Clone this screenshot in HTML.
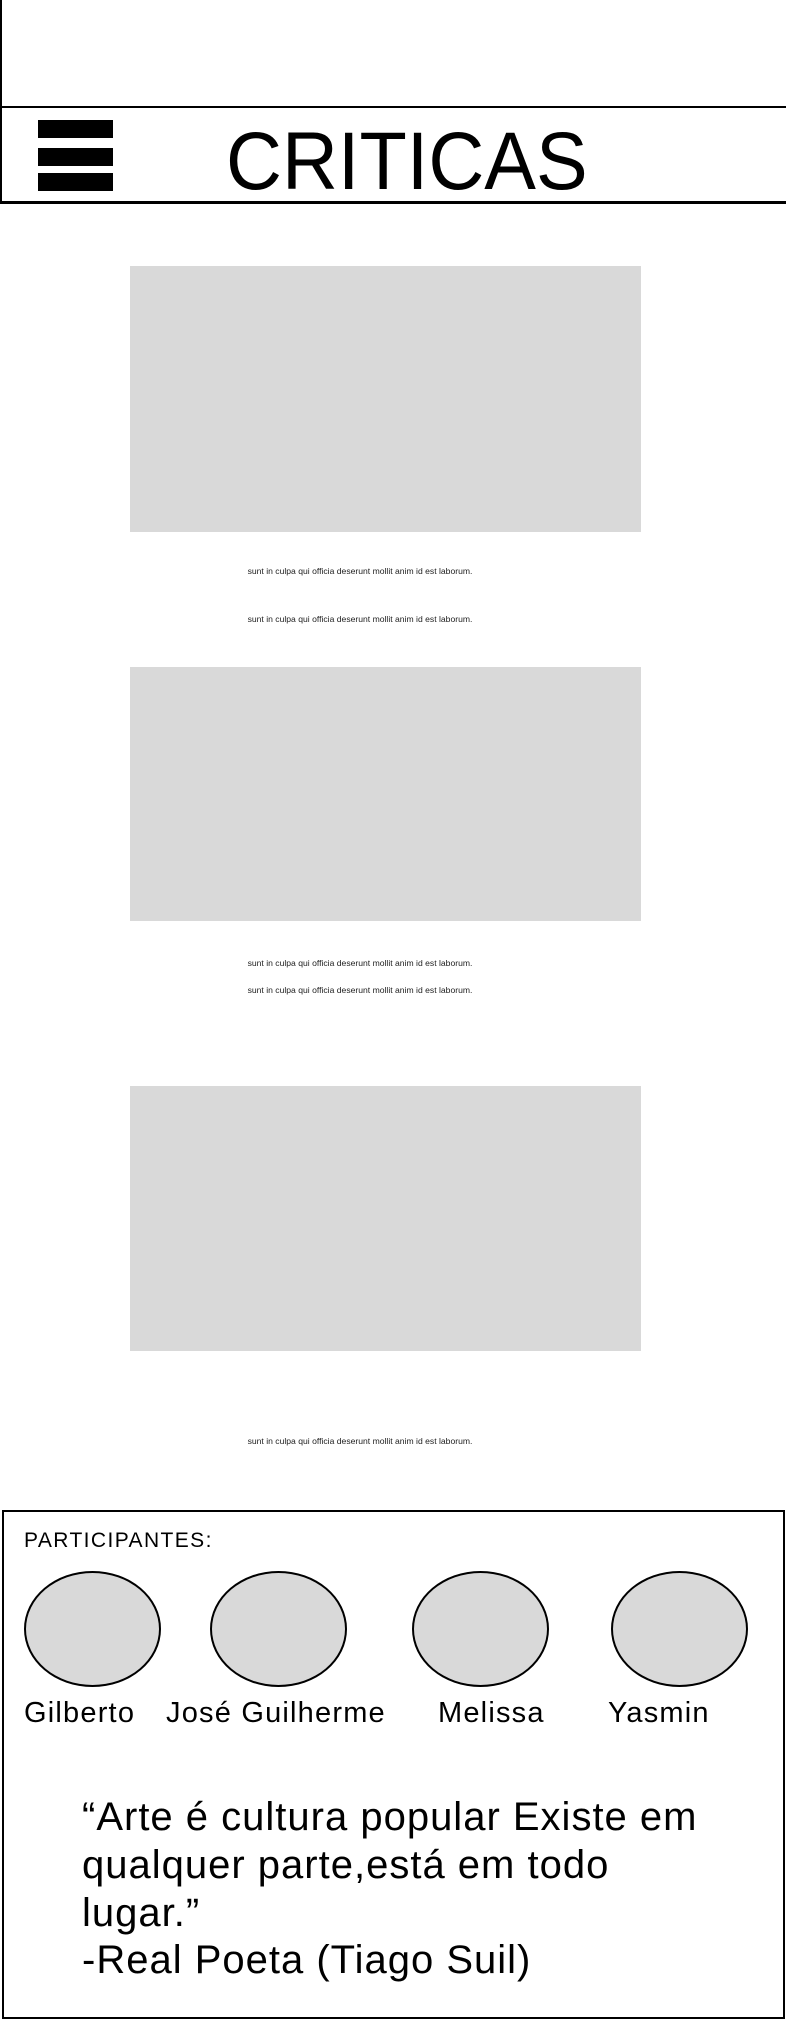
<!DOCTYPE html>
<html><head><meta charset="utf-8"><style>
*{margin:0;padding:0;box-sizing:border-box}
body{width:786px;height:2020px;position:relative;background:#fff;font-family:"Liberation Sans",sans-serif;color:#000;overflow:hidden}
.a{position:absolute}
.img{position:absolute;left:130px;width:511px;background:#d9d9d9}
.s{position:absolute;left:0;width:720px;text-align:center;font-size:8.6px;color:#222;white-space:nowrap}
.e{position:absolute;top:1571px;width:137px;height:116px;border:2px solid #000;border-radius:50%;background:#d9d9d9}
.n{position:absolute;top:1697px;font-size:29px;white-space:nowrap;letter-spacing:1.2px}
.q{position:absolute;left:82px;font-size:40px;white-space:nowrap;letter-spacing:1px}
</style></head><body>
<div class="a" style="left:0;top:0;width:2px;height:204px;background:#000"></div>
<div class="a" style="left:0;top:106px;width:786px;height:2px;background:#000"></div>
<div class="a" style="left:0;top:201px;width:786px;height:3px;background:#000"></div>
<div class="a" style="left:38px;top:120px;width:75px;height:18px;background:#000"></div>
<div class="a" style="left:38px;top:148px;width:75px;height:18px;background:#000"></div>
<div class="a" style="left:38px;top:173px;width:75px;height:18px;background:#000"></div>
<div class="a" style="left:226px;top:117px;font-size:82px;line-height:90px;transform:scaleX(0.945);transform-origin:left top;white-space:nowrap">CRITICAS</div>

<div class="img" style="top:266px;height:266px"></div>
<div class="s" style="top:566px">sunt in culpa qui officia deserunt mollit anim id est laborum.</div>
<div class="s" style="top:614px">sunt in culpa qui officia deserunt mollit anim id est laborum.</div>
<div class="img" style="top:667px;height:254px"></div>
<div class="s" style="top:958px">sunt in culpa qui officia deserunt mollit anim id est laborum.</div>
<div class="s" style="top:985px">sunt in culpa qui officia deserunt mollit anim id est laborum.</div>
<div class="img" style="top:1086px;height:265px"></div>
<div class="s" style="top:1436px">sunt in culpa qui officia deserunt mollit anim id est laborum.</div>

<div class="a" style="left:2px;top:1510px;width:783px;height:509px;border:2px solid #000"></div>
<div class="a" style="left:24px;top:1529px;font-size:21px;letter-spacing:1.4px">PARTICIPANTES:</div>
<div class="e" style="left:24px"></div>
<div class="e" style="left:210px"></div>
<div class="e" style="left:412px"></div>
<div class="e" style="left:611px"></div>
<div class="n" style="left:24px">Gilberto</div>
<div class="n" style="left:166px">José Guilherme</div>
<div class="n" style="left:438px">Melissa</div>
<div class="n" style="left:608px">Yasmin</div>
<div class="q" style="top:1795px">“Arte é cultura popular Existe em</div>
<div class="q" style="top:1843px">qualquer parte,está em todo</div>
<div class="q" style="top:1891px">lugar.”</div>
<div class="q" style="top:1938px">-Real Poeta (Tiago Suil)</div>
</body></html>
